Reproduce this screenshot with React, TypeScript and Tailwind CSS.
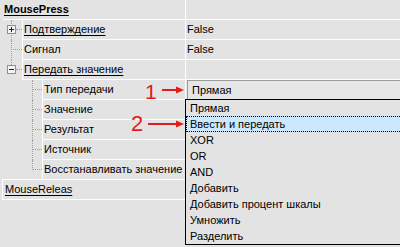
import React from "react";

type Row = {
  level: 0 | 1 | 2;
  label: string;
  value?: string;
  bold?: boolean;
  underline?: boolean;
  box?: "+" | "-";
  last?: boolean;
  first?: boolean;
  combo?: boolean;
  outline?: boolean;
};

const rows: Row[] = [
  { level: 0, label: "MousePress", bold: true, underline: true },
  { level: 1, label: "Подтверждение", underline: true, value: "False", box: "+", first: true },
  { level: 1, label: "Сигнал", value: "False" },
  { level: 1, label: "Передать значение", underline: true, box: "-", last: true },
  { level: 2, label: "Тип передачи", combo: true, first: true },
  { level: 2, label: "Значение" },
  { level: 2, label: "Результат" },
  { level: 2, label: "Источник" },
  { level: 2, label: "Восстанавливать значение", last: true },
  { level: 0, label: "MouseReleas", underline: true, outline: true },
];

const options = [
  "Прямая",
  "Ввести и передать",
  "XOR",
  "OR",
  "AND",
  "Добавить",
  "Добавить процент шкалы",
  "Умножить",
  "Разделить",
];

const ExpandBox = ({ sign }: { sign: "+" | "-" }) => (
  <div className="absolute left-[7px] top-[5px] w-[9px] h-[9px] border border-[#8e8f8f] bg-[#f4f4f4]">
    <div className="absolute left-[1px] top-[3px] w-[5px] h-[1px] bg-[#222]" />
    {sign === "+" && <div className="absolute left-[3px] top-[1px] w-[1px] h-[5px] bg-[#222]" />}
  </div>
);

const Indent = ({ row }: { row: Row }) => {
  if (row.level === 0) return <div className="w-[3px] shrink-0" />;
  if (row.level === 1)
    return (
      <div className="relative w-[22px] shrink-0">
        <div
          className={`absolute left-[11px] top-0 border-l border-dotted border-[#a0a0a0] ${
            row.last ? "h-[5px]" : "h-[20px]"
          }`}
        />
        <div
          className={`absolute top-[9px] border-t border-dotted border-[#a0a0a0] ${
            row.box ? "left-[16px] w-[6px]" : "left-[11px] w-[11px]"
          }`}
        />
        {row.box && <ExpandBox sign={row.box} />}
      </div>
    );
  return (
    <div className="relative w-[42px] shrink-0">
      <div
        className={`absolute left-[32px] top-0 border-l border-dotted border-[#a0a0a0] ${
          row.last ? "h-[10px]" : "h-[20px]"
        }`}
      />
      <div className="absolute left-[32px] top-[9px] w-[10px] border-t border-dotted border-[#a0a0a0]" />
    </div>
  );
};

const PropRow = ({ row }: { row: Row }) => {
  const nameWidth = row.level === 0 ? (row.outline ? "w-[184px]" : "w-[182px]") : row.level === 1 ? "w-[163px]" : "w-[143px]";
  return (
    <div className={`flex ${row.outline ? "h-[21px] -mt-px" : "h-[20px]"}`}>
      <Indent row={row} />
      {row.outline ? (
        <div className="flex items-center w-[184px] border border-white pl-[2px] -ml-px">
          <span className="underline underline-offset-2">{row.label}</span>
        </div>
      ) : (
        <div className="flex flex-1 border-b border-white">
          <div
            className={`flex items-center ${nameWidth} pl-[1px] whitespace-nowrap overflow-hidden ${
              row.level > 0 ? "border-l border-white" : ""
            }`}
          >
            <span className={`${row.bold ? "font-bold" : ""} ${row.underline ? "underline underline-offset-2" : ""}`}>
              {row.label}
            </span>
          </div>
          <div className="flex items-center flex-1 border-l border-white pl-[1px]">
            {row.combo ? (
              <div className="flex items-center h-[19px] w-full border-t border-l border-[#9c9c9c] bg-[#e6e6e6] pl-[4px]">
                Прямая
              </div>
            ) : (
              row.value
            )}
          </div>
        </div>
      )}
    </div>
  );
};

const Dropdown = () => (
  <div className="absolute left-[185px] top-[99px] w-[222px] border border-black bg-[#e3e3e3]">
    {options.map((o, i) => (
      <div
        key={o}
        className={`flex items-center h-[16px] pl-[4px] whitespace-nowrap ${
          i === 1 ? "bg-[#cce8ff] outline-1 outline-dotted outline-black -outline-offset-1" : ""
        }`}
      >
        {o}
      </div>
    ))}
  </div>
);

const Arrow = ({ x1, x2, y }: { x1: number; x2: number; y: number }) => (
  <g>
    <line x1={x1} y1={y} x2={x2 - 6} y2={y} stroke="#e41b1b" strokeWidth="2" />
    <polygon points={`${x2},${y} ${x2 - 8},${y - 3.5} ${x2 - 8},${y + 3.5}`} fill="#e41b1b" />
  </g>
);

export default function App() {
  return (
    <div
      className="relative w-[400px] h-[247px] overflow-hidden bg-[#e3e3e3] text-black text-[11px] leading-none"
      style={{ fontFamily: '"Liberation Sans", Arial, sans-serif' }}
    >
      <div className="flex flex-col">
        {rows.map((r) => (
          <PropRow key={r.label} row={r} />
        ))}
      </div>

      <Dropdown />

      <span className="absolute left-[145px] top-[81px] text-[21px] leading-none text-[#e41b1b]">1</span>
      <span className="absolute left-[131px] top-[113px] text-[22px] leading-none text-[#e41b1b]">2</span>
      <svg className="absolute left-0 top-0 pointer-events-none" width="400" height="247">
        <Arrow x1={162} x2={184} y={90} />
        <Arrow x1={148} x2={184} y={124} />
      </svg>
    </div>
  );
}
